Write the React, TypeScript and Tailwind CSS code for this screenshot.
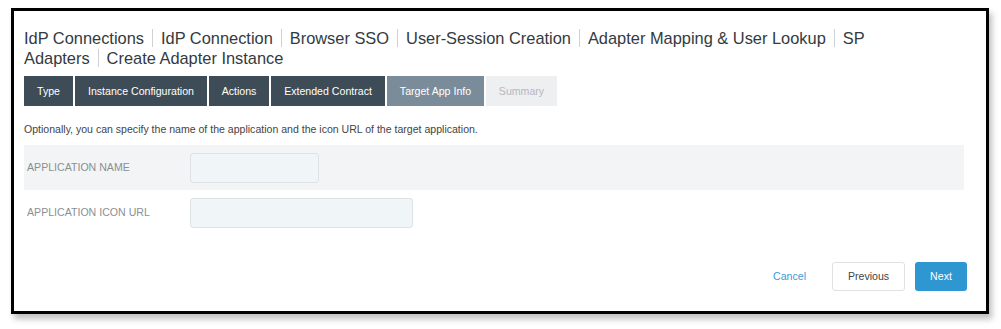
import React from "react";

const crumbs = [
  "IdP Connections",
  "IdP Connection",
  "Browser SSO",
  "User-Session Creation",
  "Adapter Mapping & User Lookup",
  "SP Adapters",
  "Create Adapter Instance",
];

const tabs: { label: string; state: "done" | "active" | "todo"; w: string }[] = [
  { label: "Type", state: "done", w: "w-[49px]" },
  { label: "Instance Configuration", state: "done", w: "w-[132px]" },
  { label: "Actions", state: "done", w: "w-[60px]" },
  { label: "Extended Contract", state: "done", w: "w-[114px]" },
  { label: "Target App Info", state: "active", w: "w-[97px]" },
  { label: "Summary", state: "todo", w: "w-[71px]" },
];

export default function App() {
  return (
    <div className="w-[1001px] h-[329px] bg-white pt-[8px] pl-[11px]" style={{ fontFamily: '"Liberation Sans", Arial, sans-serif' }}>
      <div className="w-[978px] h-[306px] border-[3px] border-black bg-white shadow-[3px_5px_6px_rgba(0,0,0,0.25)] pl-[10px] pr-[22px] pt-[17px]">
        <h1 className="text-[16.4px] leading-[20px] text-[#333a40] font-normal pr-[80px]">
          {crumbs.map((c, i) => (
            <React.Fragment key={c}>
              {i > 0 && (
                <span className="inline-block w-px h-[18px] bg-[#cdd1d4] align-[-3px] mx-[8px]" />
              )}
              {c === "SP Adapters" ? (
                <>
                  <span>SP</span> <span>Adapters</span>
                </>
              ) : (
                <span className="whitespace-nowrap">{c}</span>
              )}
            </React.Fragment>
          ))}
        </h1>

        <div className="flex mt-[8px] h-[30px] gap-[2px]">
          {tabs.map((t) => (
            <div
              key={t.label}
              className={
                "flex items-center justify-center whitespace-nowrap text-[10.6px] pt-[1px] " +
                t.w +
                " " +
                (t.state === "done"
                  ? "bg-[#3e4c57] text-white"
                  : t.state === "active"
                  ? "bg-[#7a8b9a] text-white"
                  : "bg-[#eeeff1] text-[#b3b8bd]")
              }
            >
              {t.label}
            </div>
          ))}
        </div>

        <p className="text-[10.55px] text-[#444] mt-[16px] leading-[14px]">
          Optionally, you can specify the name of the application and the icon URL of the target application.
        </p>

        <div className="mt-[9px]">
          <div className="flex items-center h-[45px] bg-[#f3f4f5]">
            <div className="w-[166px] pl-[3px] text-[10.6px] text-[#8a8f94] uppercase">Application Name</div>
            <div className="w-[129px] h-[30px] rounded-[3px] border border-[#dde2e5] bg-[#f0f5f8]" />
          </div>
          <div className="flex items-center h-[45px]">
            <div className="w-[166px] pl-[3px] text-[10.6px] text-[#8a8f94] uppercase">Application Icon URL</div>
            <div className="w-[223px] h-[30px] rounded-[3px] border border-[#dde2e5] bg-[#f0f5f8]" />
          </div>
        </div>

        <div className="flex justify-end items-center mt-[27px] mr-[-3px]">
          <span className="text-[10.6px] text-[#3a9ad6] mr-[26px]">Cancel</span>
          <div className="w-[73px] h-[29px] flex items-center justify-center border border-[#dfe2e4] rounded-[3px] text-[10.6px] text-[#444] bg-white mr-[10px]">
            Previous
          </div>
          <div className="w-[52px] h-[29px] flex items-center justify-center rounded-[3px] text-[10.6px] text-white bg-[#2e97d2]">
            Next
          </div>
        </div>
      </div>
    </div>
  );
}
